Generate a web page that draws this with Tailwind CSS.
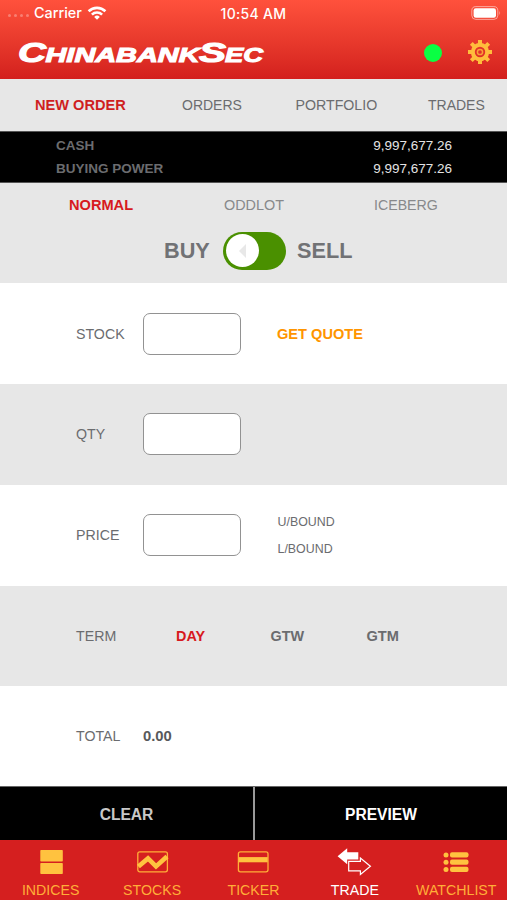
<!DOCTYPE html>
<html lang="en">
  <head>
    <meta charset="UTF-8" />
    <meta name="viewport" content="width=device-width, initial-scale=1.0" />
    <title>ChinabankSec - Trade</title>
    <script src="https://cdn.jsdelivr.net/npm/@tailwindcss/browser@4"></script>
  </head>
  <body class="bg-white">
    <div class="flex h-[900px] w-[507px] flex-col overflow-hidden font-['Liberation_Sans',Arial,sans-serif] text-[14.2px] leading-4 text-[#6b6c6f]">
      <!-- Header -->
      <header class="h-[79px] shrink-0 bg-linear-to-b from-[#ff513c] to-[#d31f1d] text-white">
        <div class="grid h-[26px] grid-cols-3 items-center font-[Inter,sans-serif] text-sm font-medium">
          <div class="flex items-center pl-2">
            <span class="mt-1.5 flex w-[26px] gap-[3px]">
              <i class="size-[3px] rounded-full bg-white/30"></i>
              <i class="size-[3px] rounded-full bg-white/30"></i>
              <i class="size-[3px] rounded-full bg-white/30"></i>
              <i class="size-[3px] rounded-full bg-white/30"></i>
            </span>
            <span class="text-[14.4px]">Carrier</span>
            <svg class="ml-[5px] h-[14px] w-[20px]" viewBox="0 0 20 14" fill="none" stroke="#fff" stroke-width="2.6">
              <path d="M1.6 5.3a12 12 0 0 1 16.8 0M4.9 8.6a7.3 7.3 0 0 1 10.2 0" />
              <path d="M10 13.7 7.2 10.9a4 4 0 0 1 5.6 0Z" fill="#fff" stroke="none" />
            </svg>
          </div>
          <div class="pt-0.5 text-center text-[14px] tracking-[0.3px]">10:54 AM</div>
          <div class="flex items-center justify-end pr-1.5">
            <svg class="h-[14px] w-[30px]" viewBox="0 0 30 14" fill="none">
              <rect x=".8" y=".6" width="26" height="12.8" rx="4" stroke="#fff" stroke-opacity=".5" />
              <rect x="2.6" y="2.3" width="22.4" height="9.4" rx="2.2" fill="#fff" />
              <path d="M28.3 4.8q1.6 2.2 0 4.4z" fill="#fff" fill-opacity=".5" />
            </svg>
          </div>
        </div>
        <div class="flex h-[53px] items-center">
          <svg class="ml-[18px] h-[30px] w-[248px]" viewBox="0 0 248 30" fill="#fff" stroke="#fff" stroke-width="1.1" font-family="Liberation Sans, Arial, sans-serif" font-weight="700" font-style="italic">
            <text x="0" y="24" font-size="27.5" textLength="28" lengthAdjust="spacingAndGlyphs">C</text>
            <text x="27.5" y="24" font-size="21" textLength="154" lengthAdjust="spacingAndGlyphs">HINABANK</text>
            <text x="181" y="24" font-size="27.5" textLength="27" lengthAdjust="spacingAndGlyphs">S</text>
            <text x="207" y="24" font-size="21" textLength="38" lengthAdjust="spacingAndGlyphs">EC</text>
          </svg>
          <span class="ml-[157.5px] size-[18px] rounded-full bg-[#0aff43]"></span>
          <svg class="mb-px ml-[25px] size-[26px]" viewBox="-13 -13 26 26" fill="none" stroke="#ffbd3c">
            <path d="M0-12V-8M0 8V12M-12 0H-8M8 0H12M-8.7-8.7-5.7-5.7M5.7 5.7 8.7 8.7M-8.7 8.7-5.7 5.7M5.7-5.7 8.7-8.7" stroke-width="4" />
            <circle r="7.2" stroke-width="4" />
            <circle r="2.6" stroke-width="1.5" stroke-opacity=".8" />
          </svg>
        </div>
      </header>

      <!-- Page tabs -->
      <nav class="flex h-[52px] shrink-0 items-center bg-[#e7e7e7] pl-[35px]">
        <a class="w-[147px] text-[14.6px] font-bold text-[#cf1f1f]">NEW ORDER</a>
        <a class="w-[113.5px] text-[14px]">ORDERS</a>
        <a class="w-[132.5px]">PORTFOLIO</a>
        <a class="text-[14px]">TRADES</a>
      </nav>

      <!-- Balances -->
      <section class="flex h-[52px] shrink-0 flex-col justify-center gap-[7px] border-y border-[#555] bg-black pr-[55px] pl-[56px] text-[13.5px]">
        <div class="flex justify-between"><b>CASH</b><span class="text-[#e4e4e4]">9,997,677.26</span></div>
        <div class="flex justify-between"><b>BUYING POWER</b><span class="text-[#e4e4e4]">9,997,677.26</span></div>
      </section>

      <!-- Order type -->
      <section class="h-[100px] shrink-0 bg-[#e7e7e7] pt-[14px]">
        <div class="flex pl-[69px] text-[#88898b]">
          <a class="w-[155px] text-[14.6px] font-bold text-[#d71920]">NORMAL</a>
          <a class="w-[150px] text-[14.4px]">ODDLOT</a>
          <a>ICEBERG</a>
        </div>
        <div class="mt-[18px] flex h-[39px] items-center pl-[164px] text-[21.7px] leading-6 font-bold text-[#717275]">
          <span class="w-[59px]">BUY</span>
          <span class="flex h-[38px] w-[63px] items-center rounded-full bg-[#4a9000] pl-[3px]">
            <span class="flex size-[33px] items-center justify-center rounded-full bg-white">
              <svg class="h-[14px] w-[8px]" viewBox="0 0 8 14"><path d="M7 0v14L0 7z" fill="#e8e8e8" /></svg>
            </span>
          </span>
          <span class="ml-[11px]">SELL</span>
        </div>
      </section>

      <!-- Order form -->
      <section class="flex h-[101px] shrink-0 items-center bg-white pl-[76px]">
        <label class="w-[67px]">STOCK</label>
        <input class="h-[42px] w-[98px] rounded-[7px] border-[1.5px] border-[#929292] bg-white" />
        <a class="ml-[36px] text-[14.6px] font-bold text-[#ff9500]">GET QUOTE</a>
      </section>
      <section class="flex h-[100.5px] shrink-0 items-center bg-[#e7e7e7] pl-[76px]">
        <label class="w-[67px]">QTY</label>
        <input class="h-[42px] w-[98px] rounded-[7px] border-[1.5px] border-[#929292] bg-white" />
      </section>
      <section class="flex h-[101px] shrink-0 items-center bg-white pl-[76px]">
        <label class="w-[67px]">PRICE</label>
        <input class="h-[42px] w-[98px] rounded-[7px] border-[1.5px] border-[#929292] bg-white" />
        <div class="ml-[36.5px] flex flex-col gap-[11px] text-[12.4px]">
          <span>U/BOUND</span>
          <span>L/BOUND</span>
        </div>
      </section>
      <section class="flex h-[100.5px] shrink-0 items-center bg-[#e7e7e7] pl-[76px]">
        <label class="w-[100px]">TERM</label>
        <b class="w-[94.5px] text-[14.4px] text-[#d71920]">DAY</b>
        <b class="w-[96px] text-[14.4px]">GTW</b>
        <b class="text-[14.6px]">GTM</b>
      </section>
      <section class="flex h-[100px] shrink-0 items-center bg-white pl-[76px]">
        <label class="w-[67px]">TOTAL</label>
        <b class="text-[14.8px] text-[#58595b]">0.00</b>
      </section>

      <!-- Actions -->
      <section class="grid h-[54px] shrink-0 grid-cols-[255px_1fr] border-t border-[#666] bg-black text-[15.6px] font-bold">
        <button class="border-r-2 border-[#9a9a9a] pt-0.5 text-[#c8c8c8]">CLEAR</button>
        <button class="pt-0.5 text-white">PREVIEW</button>
      </section>

      <!-- Bottom bar -->
      <nav class="grid h-[60px] shrink-0 grid-cols-5 bg-[#d51f1f] pt-[6px] text-[#ffae38]">
        <a class="flex flex-col items-center gap-[4px]">
          <svg class="h-[32px] w-[36px]" viewBox="0 0 36 32" fill="#ffc23f">
            <rect x="7.3" y="4" width="22.5" height="11.5" rx=".8" />
            <rect x="7.3" y="17" width="22.5" height="11" rx=".8" />
          </svg>
          INDICES
        </a>
        <a class="flex flex-col items-center gap-[4px]">
          <svg class="h-[32px] w-[36px]" viewBox="0 0 36 32" fill="none">
            <rect x="3.8" y="5.8" width="29.6" height="20" rx="2" stroke="#ffae38" stroke-width="1.3" />
            <path d="M4.4 20.5 14 12.4l8 8L33 10.5" stroke="#ffc23f" stroke-width="4.6" />
          </svg>
          STOCKS
        </a>
        <a class="flex flex-col items-center gap-[4px]">
          <svg class="h-[32px] w-[36px]" viewBox="0 0 36 32" fill="none">
            <rect x="3.4" y="5.8" width="29.6" height="20" rx="2" stroke="#ffae38" stroke-width="1.3" />
            <path d="M3.7 13.7H32.7" stroke="#ffc23f" stroke-width="5.2" />
          </svg>
          TICKER
        </a>
        <a class="flex flex-col items-center gap-[4px] text-white">
          <svg class="h-[32px] w-[36px]" viewBox="0 0 36 32">
            <path d="M.6 10.3 10.2 2.2V6.3H21.3V13.4H10.2V18.2Z" fill="#fff" />
            <path d="M11.7 15.3H23.4V12L33.4 20.2 23.4 28.4V24.8H11.7Z" fill="#d51f1f" stroke="#fff" stroke-width="1.2" />
          </svg>
          TRADE
        </a>
        <a class="flex flex-col items-center gap-[4px]">
          <svg class="h-[32px] w-[36px]" viewBox="0 0 36 32" fill="#ffc23f">
            <circle cx="8" cy="9" r="2.5" /><rect x="12" y="6.3" width="18.5" height="5.3" rx="2" />
            <circle cx="8" cy="16.2" r="2.5" /><rect x="12" y="13.5" width="18.5" height="5.3" rx="2" />
            <circle cx="8" cy="23.5" r="2.5" /><rect x="12" y="20.8" width="18.5" height="5.3" rx="2" />
          </svg>
          WATCHLIST
        </a>
      </nav>
    </div>
  </body>
</html>
